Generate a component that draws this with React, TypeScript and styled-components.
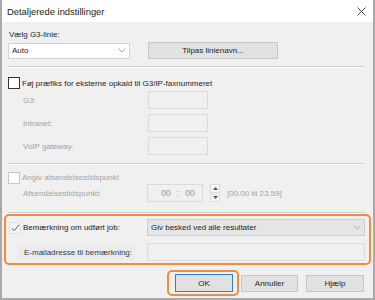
import React from 'react';
import styled, { createGlobalStyle, css } from 'styled-components';

const GlobalStyle = createGlobalStyle`
  body {
    margin: 0;
    font-family: "Liberation Sans", Arial, sans-serif;
    color: #262626;
  }
`;

const Window = styled.div`
  width: 375px;
  height: 300px;
  box-sizing: border-box;
  border: 2px solid #a9a9a9;
  border-top: none;
  background: #f0f0f0;
  display: flex;
  flex-direction: column;
  overflow: hidden;
`;

const TitleBar = styled.div`
  height: 22px;
  flex: none;
  background: #ffffff;
  display: flex;
  align-items: center;
  justify-content: space-between;
  padding: 0 7px 0 5px;
  font-size: 9.4px;
  color: #1a1a1a;
`;

const CloseIcon = styled.svg`
  width: 9px;
  height: 9px;
`;

const Body = styled.div`
  flex: 1;
  display: flex;
  flex-direction: column;
  padding: 0 8px 0 6px;
  font-size: 8px;
`;

const TopLabel = styled.div`
  margin-top: 6px;
  height: 14px;
  line-height: 14px;
  padding-left: 1px;
`;

const LineRow = styled.div`
  display: flex;
  align-items: center;
  gap: 18px;
`;

const Select = styled.div<{ $width?: number; $grey?: boolean }>`
  box-sizing: border-box;
  width: ${(p) => (p.$width ? `${p.$width}px` : 'auto')};
  flex: ${(p) => (p.$width ? 'none' : '1')};
  height: ${(p) => (p.$grey ? 17 : 16)}px;
  background: ${(p) => (p.$grey ? '#e5e5e5' : '#ffffff')};
  border: 1px solid ${(p) => (p.$grey ? '#cdcdcd' : '#d4d4d4')};
  display: flex;
  align-items: center;
  justify-content: space-between;
  padding: 0 3px 0 3px;
`;

const Chevron = styled.svg`
  width: 8px;
  height: 5px;
`;

const Button = styled.div<{ $width: number; $default?: boolean }>`
  box-sizing: border-box;
  width: ${(p) => p.$width}px;
  height: ${(p) => (p.$default ? 18 : 17)}px;
  background: #e1e1e1;
  border: 1px solid ${(p) => (p.$default ? '#2f7fd8' : '#c6c6c6')};
  display: flex;
  align-items: center;
  justify-content: center;
  color: #262626;
`;

const Separator = styled.div<{ $top: number }>`
  margin-top: ${(p) => p.$top}px;
  border-top: 1px solid #cfcfcf;
  border-bottom: 1px solid #fafafa;
`;

const CheckRow = styled.div<{ $top: number; $height: number; $disabled?: boolean }>`
  margin-top: ${(p) => p.$top}px;
  height: ${(p) => p.$height}px;
  display: flex;
  align-items: center;
  gap: 2px;
  color: ${(p) => (p.$disabled ? '#a3a3a3' : '#262626')};
`;

const Box = styled.div<{ $kind: 'normal' | 'disabled' | 'checked' }>`
  box-sizing: border-box;
  width: 12px;
  height: 12px;
  flex: none;
  display: flex;
  align-items: center;
  justify-content: center;
  background: #ffffff;
  ${(p) =>
    p.$kind === 'normal' &&
    css`
      border: 1px solid #333333;
    `}
  ${(p) =>
    p.$kind === 'disabled' &&
    css`
      border: 1px solid #c7c7c7;
    `}
  ${(p) =>
    p.$kind === 'checked' &&
    css`
      border: 1px solid #e0e0e0;
      background: #f4f4f4;
    `}
`;

const FieldGrid = styled.div`
  margin-top: 1px;
  display: grid;
  grid-template-columns: 140px 60px;
  grid-auto-rows: 18px;
  row-gap: 5px;
  align-items: center;
`;

const SubLabel = styled.div`
  padding-left: 15px;
  color: #a3a3a3;
`;

const Input = styled.div<{ $width?: number }>`
  box-sizing: border-box;
  height: 18px;
  width: ${(p) => (p.$width ? `${p.$width}px` : 'auto')};
  flex: ${(p) => (p.$width ? 'none' : '1')};
  border: 1px solid #dadada;
  background: #f0f0f0;
`;

const TimeRow = styled.div`
  height: 18px;
  display: flex;
  align-items: center;
  color: #a3a3a3;
`;

const TimeLabel = styled.div`
  width: 124px;
  padding-left: 15px;
`;

const TimeBox = styled.div`
  box-sizing: border-box;
  width: 56px;
  height: 18px;
  border: 1px solid #dadada;
  display: flex;
  align-items: center;
  justify-content: center;
  gap: 6px;
  padding-left: 6px;
  color: #9a9a9a;
  font-size: 8.5px;
`;

const Spinner = styled.div`
  margin-left: 7px;
  width: 10px;
  height: 18px;
  display: flex;
  flex-direction: column;
  gap: 1px;
`;

const SpinHalf = styled.div`
  flex: 1;
  background: #f7f7f7;
  border: 1px solid #dcdcdc;
  display: flex;
  align-items: center;
  justify-content: center;
`;

const Range = styled.div`
  margin-left: 7px;
  color: #a3a3a3;
`;

const Highlight = styled.div`
  margin: 0 -6px 0 -4px;
  border: 2px solid #f28b3c;
  border-radius: 5px;
  padding: 3px 4px 2px 3px;
  display: flex;
  flex-direction: column;
  gap: 7px;
`;

const HighRow = styled.div`
  display: flex;
  align-items: center;
`;

const HighLead = styled.div`
  width: 138px;
  flex: none;
  display: flex;
  align-items: center;
  gap: 2px;
`;

const MailLabel = styled.div`
  margin-left: 9px;
  width: 117px;
  height: 15px;
  line-height: 15px;
  padding-left: 6px;
  box-sizing: border-box;
  background: #ebebeb;
  color: #3a3a3a;
`;

const ButtonBar = styled.div`
  margin-top: 5px;
  display: flex;
  justify-content: flex-end;
  align-items: center;
  padding-right: 1px;
`;

const FocusRing = styled.div`
  border: 2px solid #f28b3c;
  border-radius: 5px;
  padding: 2px 4px 2px 6px;
  margin-right: 2px;
`;

const Spacer = styled.div<{ $w: number }>`
  width: ${(p) => p.$w}px;
`;

const ChevronDown = ({ color = '#9a9a9a' }: { color?: string }) => (
  <Chevron viewBox="0 0 8 5">
    <path d="M0.5 0.5 L4 4 L7.5 0.5" fill="none" stroke={color} strokeWidth="0.9" />
  </Chevron>
);

const App: React.FC = () => {
  return (
    <>
      <GlobalStyle />
      <Window>
        <TitleBar>
          <span>Detaljerede indstillinger</span>
          <CloseIcon viewBox="0 0 9 9">
            <path d="M0.5 0.5 L8.5 8.5 M8.5 0.5 L0.5 8.5" stroke="#333" strokeWidth="0.9" />
          </CloseIcon>
        </TitleBar>
        <Body>
          <TopLabel>Vælg G3-linie:</TopLabel>
          <LineRow>
            <Select $width={122}>
              <span>Auto</span>
              <ChevronDown />
            </Select>
            <Button $width={130}>Tilpas linienavn...</Button>
          </LineRow>

          <Separator $top={7} />

          <CheckRow $top={8} $height={14}>
            <Box $kind="normal" />
            <span>Føj præfiks for eksterne opkald til G3/IP-faxnummeret</span>
          </CheckRow>

          <FieldGrid>
            <SubLabel>G3:</SubLabel>
            <Input />
            <SubLabel>Intranet:</SubLabel>
            <Input />
            <SubLabel>VoIP gateway:</SubLabel>
            <Input />
          </FieldGrid>

          <Separator $top={8} />

          <CheckRow $top={6} $height={13} $disabled>
            <Box $kind="disabled" />
            <span>Angiv afsendelsestidspunkt</span>
          </CheckRow>

          <TimeRow>
            <TimeLabel>Afsendelsestidspunkt:</TimeLabel>
            <TimeBox>
              <span>00</span>
              <span>:</span>
              <span>00</span>
            </TimeBox>
            <Spinner>
              <SpinHalf>
                <svg width="5" height="3" viewBox="0 0 5 3">
                  <path d="M0 3 L2.5 0 L5 3 Z" fill="#555" />
                </svg>
              </SpinHalf>
              <SpinHalf>
                <svg width="5" height="3" viewBox="0 0 5 3">
                  <path d="M0 0 L2.5 3 L5 0 Z" fill="#555" />
                </svg>
              </SpinHalf>
            </Spinner>
            <Range>[00.00 til 23.59]</Range>
          </TimeRow>

          <Separator $top={10} />

          <Highlight>
            <HighRow>
              <HighLead>
                <Box $kind="checked">
                  <svg width="9" height="8" viewBox="0 0 9 8">
                    <path d="M0.8 4.2 L3.2 6.6 L8.2 0.8" fill="none" stroke="#5a5a5a" strokeWidth="1" />
                  </svg>
                </Box>
                <span>Bemærkning om udført job:</span>
              </HighLead>
              <Select $grey>
                <span>Giv besked ved alle resultater</span>
                <ChevronDown color="#a8a8a8" />
              </Select>
            </HighRow>
            <HighRow>
              <MailLabel>E-mailadresse til bemærkning:</MailLabel>
              <Spacer $w={12} />
              <Input />
            </HighRow>
          </Highlight>

          <ButtonBar>
            <FocusRing>
              <Button $width={58} $default>
                OK
              </Button>
            </FocusRing>
            <Button $width={57}>Annuller</Button>
            <Spacer $w={8} />
            <Button $width={58}>Hjælp</Button>
          </ButtonBar>
        </Body>
      </Window>
    </>
  );
};

export default App;
